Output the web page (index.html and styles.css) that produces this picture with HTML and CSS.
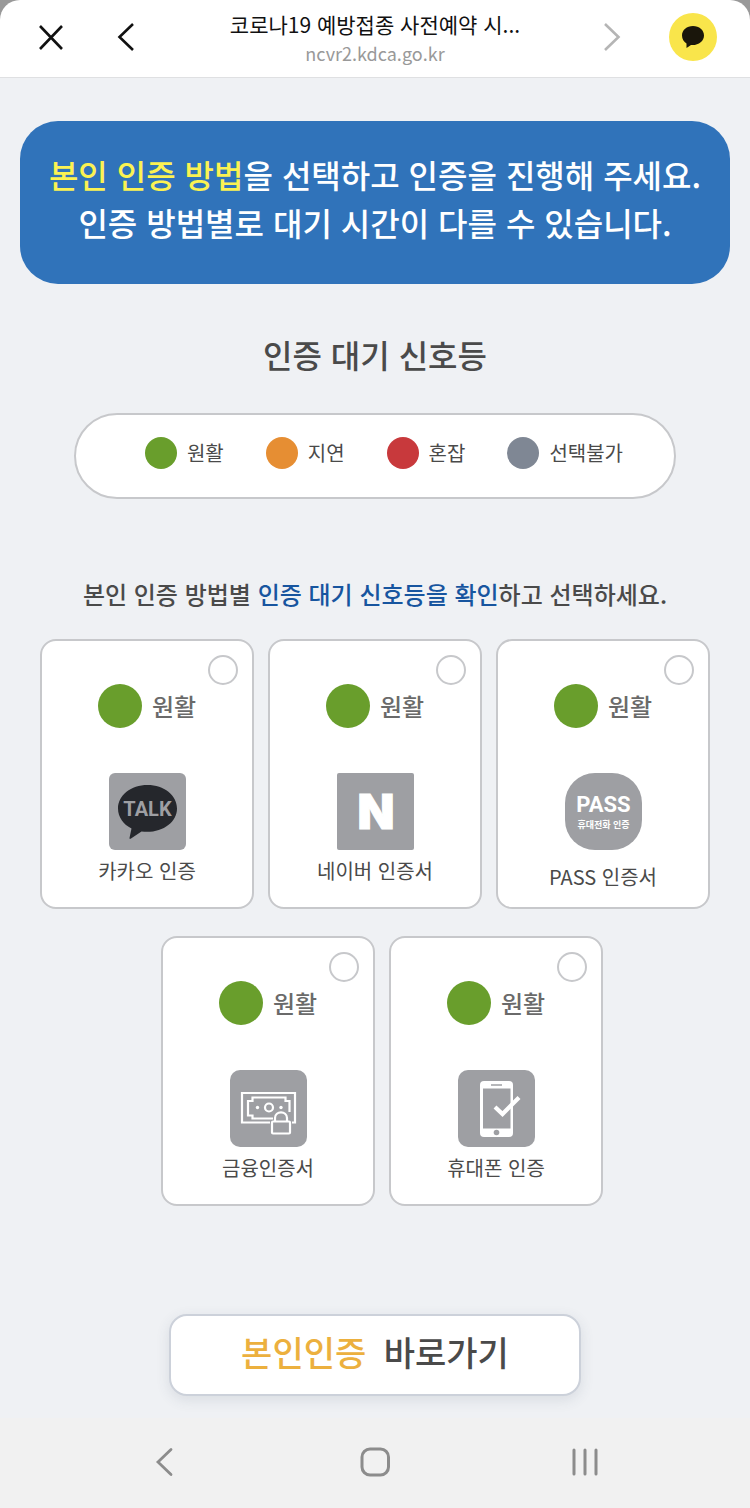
FILE: index.html
```html
<!DOCTYPE html>
<html lang="ko">
<head>
  <meta charset="UTF-8" />
  <meta name="viewport" content="width=device-width, initial-scale=1.0"/>
  <title>코로나19 예방접종 사전예약 시스템</title>
  <link rel="stylesheet" href="styles.css">
</head>
<body>
  <header class="browser-bar">
    <div class="bar-left">
      <button type="button" class="bar-button" aria-label="닫기">
        <svg width="28" height="28" viewBox="0 0 28 28"><path d="M3 3L25 26M25 3L3 26" fill="none" stroke="#111" stroke-width="2.6"/></svg>
      </button>
      <button type="button" class="bar-button" aria-label="뒤로">
        <svg width="28" height="28" viewBox="0 0 28 28"><path d="M21 1L7.500 14L21 27" fill="none" stroke="#111" stroke-width="2.6"/></svg>
      </button>
    </div>
    <div class="bar-title">
      <span class="page-name">코로나19 예방접종 사전예약 시...</span>
      <span class="page-url">ncvr2.kdca.go.kr</span>
    </div>
    <div class="bar-right">
      <button type="button" class="bar-button" aria-label="앞으로">
        <svg width="28" height="28" viewBox="0 0 28 28"><path d="M7 1L20.500 14L7 27" fill="none" stroke="#b5b5b5" stroke-width="2.6"/></svg>
      </button>
      <button type="button" class="bar-button talk-button" aria-label="카카오톡">
        <svg width="48" height="48" viewBox="0 0 48 48">
          <path d="M24 13C17.800 13 13 17 13 22.500C13 26 14.900 29 17.500 30.500L17.500 35L22 32C29 32.700 35 28.500 35 22.500C35 17 30.200 13 24 13Z" fill="#1a160b"/>
        </svg>
      </button>
    </div>
  </header>

  <main class="content">
    <p class="banner"><em>본인 인증 방법</em>을 선택하고 인증을 진행해 주세요.<br>인증 방법별로 대기 시간이 다를 수 있습니다.</p>

    <h1 class="heading">인증 대기 신호등</h1>
    <ul class="legend">
      <li><span class="dot green"></span>원활</li>
      <li><span class="dot orange"></span>지연</li>
      <li><span class="dot red"></span>혼잡</li>
      <li><span class="dot gray"></span>선택불가</li>
    </ul>

    <form class="auth-form">
      <p class="guide">본인 인증 방법별 <em>인증 대기 신호등을 확인</em>하고 선택하세요.</p>
      <div class="cards">
        <label class="card">
          <input type="radio" name="auth" value="kakao">
          <span class="status"><span class="dot big green"></span>원활</span>
          <svg class="logo" viewBox="0 0 77 77" aria-hidden="true">
            <rect width="77" height="77" rx="6" fill="#9e9fa3"/>
            <path d="M38.500 12C22 12 9 22.300 9 35.500C9 44 14.500 51.500 22.500 55.500L20.500 65Q20.500 66.500 22 65.500L32.500 58.500C52 61 68 50 68 35.500C68 22.300 55 12 38.500 12Z" fill="#25272c"/>
            <text x="38.500" y="43" class="logo-talk">TALK</text>
          </svg>
          <span class="name">카카오 인증</span>
        </label>
        <label class="card">
          <input type="radio" name="auth" value="naver">
          <span class="status"><span class="dot big green"></span>원활</span>
          <svg class="logo" viewBox="0 0 77 77" aria-hidden="true">
            <rect width="77" height="77" rx="2" fill="#9e9fa3"/>
            <text x="39" y="56" class="logo-n">N</text>
          </svg>
          <span class="name">네이버 인증서</span>
        </label>
        <label class="card">
          <input type="radio" name="auth" value="pass">
          <span class="status"><span class="dot big green"></span>원활</span>
          <svg class="logo logo-round" viewBox="0 0 77 77" aria-hidden="true">
            <rect width="77" height="77" rx="30" fill="#9e9fa3"/>
            <text x="38.500" y="39" class="logo-pass">PASS</text>
            <text x="38.500" y="55" class="logo-phone">휴대전화 인증</text>
          </svg>
          <span class="name">PASS 인증서</span>
        </label>
        <label class="card card-shift">
          <input type="radio" name="auth" value="finance">
          <span class="status"><span class="dot big green"></span>원활</span>
          <svg class="logo" viewBox="0 0 77 77" aria-hidden="true">
            <rect width="77" height="77" rx="10" fill="#9e9fa3"/>
            <g fill="none" stroke="#fff" stroke-width="2.2">
              <path d="M40 52.500H12V23H65V52.500H62"/>
              <path d="M43 48.500H22.500V45.500H18V31H22.500V27.500H55.500V31H59.500V42"/>
              <circle cx="39" cy="37.500" r="4"/>
              <path d="M45 51V48C45 40.500 57 40.500 57 48V51"/>
              <rect x="42" y="51.500" width="18" height="12" rx="1"/>
            </g>
            <circle cx="27.500" cy="37.500" r="1.700" fill="#fff"/>
            <circle cx="51" cy="37.500" r="1.700" fill="#fff"/>
          </svg>
          <span class="name">금융인증서</span>
        </label>
        <label class="card">
          <input type="radio" name="auth" value="phone">
          <span class="status"><span class="dot big green"></span>원활</span>
          <svg class="logo" viewBox="0 0 77 77" aria-hidden="true">
            <rect width="77" height="77" rx="10" fill="#9e9fa3"/>
            <rect x="22" y="11" width="33" height="56" rx="4" fill="#fff"/>
            <rect x="25" y="18.500" width="27.500" height="40" fill="#9e9fa3"/>
            <path d="M33 15H44" stroke="#9e9fa3" stroke-width="1.500"/>
            <circle cx="38.500" cy="62.500" r="2.800" fill="#9e9fa3"/>
            <path d="M37 37L44.500 44L61 27.500" fill="none" stroke="#fff" stroke-width="4.200"/>
          </svg>
          <span class="name">휴대폰 인증</span>
        </label>
      </div>
      <button type="submit" class="go-button"><em>본인인증</em> 바로가기</button>
    </form>
  </main>

  <nav class="system-nav">
    <button type="button" aria-label="이전">
      <svg width="32" height="32" viewBox="0 0 32 32"><path d="M22 3.500L9 16L22 28.500" fill="none" stroke="#8c8c8c" stroke-width="2.800" stroke-linecap="round"/></svg>
    </button>
    <button type="button" aria-label="홈">
      <svg width="32" height="32" viewBox="0 0 32 32"><rect x="3" y="3" width="26.500" height="26" rx="8" fill="none" stroke="#8c8c8c" stroke-width="3"/></svg>
    </button>
    <button type="button" aria-label="최근 앱">
      <svg width="32" height="32" viewBox="0 0 32 32"><path d="M5 4V28M16 4V28M27 4V28" stroke="#8c8c8c" stroke-width="3" stroke-linecap="round"/></svg>
    </button>
  </nav>
</body>
</html>
```
FILE: styles.css
```css
* {
  box-sizing: border-box;
}
body {
  margin: 0;
  min-height: 100vh;
  display: flex;
  flex-direction: column;
  font-family: "Noto Sans CJK KR", sans-serif;
  background-color: #eff1f4;
  color: #4a4a4a;
}
button {
  padding: 0;
  border: none;
  background: none;
  font-family: inherit;
  color: inherit;
  cursor: pointer;
}
svg {
  display: block;
}
em {
  font-style: normal;
}

/* top bar */
.browser-bar {
  display: grid;
  grid-template-columns: 1fr auto 1fr;
  height: 78px;
  background: linear-gradient(#999, #999) top / 100% 20px no-repeat;
  position: relative;
}
.browser-bar::before {
  content: "";
  position: absolute;
  inset: 0;
  background: #fff;
  border-bottom: 1px solid #dfe0e2;
  border-radius: 20px 20px 0 0;
}
.bar-left,
.bar-right,
.bar-title {
  position: relative;
  display: flex;
}
.bar-left,
.bar-right {
  align-items: center;
  padding-bottom: 4px;
}
.bar-left {
  gap: 27px;
  padding-left: 27px;
}
.bar-right {
  gap: 33px;
  justify-content: flex-end;
  padding-right: 33px;
}
.bar-button {
  width: 48px;
  height: 48px;
  display: flex;
  align-items: center;
  justify-content: center;
}
.talk-button {
  border-radius: 50%;
  background-color: #f9e54b;
}
.bar-title {
  flex-direction: column;
  align-items: center;
  padding-top: 9px;
}
.page-name {
  font-size: 21px;
  line-height: 30px;
  color: #111;
}
.page-url {
  font-size: 18px;
  line-height: 28px;
  color: #999;
}

/* page */
.content {
  flex: 1;
  padding: 43px 20px 22px;
}
.banner {
  margin: 0;
  padding: 29px 20px 38px;
  border-radius: 38px;
  background-color: #3073ba;
  color: #fff;
  font-size: 32px;
  font-weight: 500;
  line-height: 48px;
  text-align: center;
}
.banner em {
  color: #fbf252;
}
.heading {
  margin: 46px 0 35px;
  font-size: 32px;
  font-weight: 500;
  line-height: 48px;
  text-align: center;
}
.legend {
  display: flex;
  justify-content: center;
  gap: 42px;
  max-width: 602px;
  margin: 0 auto;
  padding: 22px 0 28px 18px;
  list-style: none;
  border: 2px solid #c7c8cb;
  border-radius: 43px;
  background-color: #fff;
  font-size: 20px;
  line-height: 32px;
}
.legend li {
  display: flex;
  align-items: center;
  gap: 10px;
}
.dot {
  width: 32px;
  height: 32px;
  border-radius: 50%;
}
.dot.big {
  width: 44px;
  height: 44px;
}
.green {
  background-color: #699e2c;
}
.orange {
  background-color: #e68e33;
}
.red {
  background-color: #c8393c;
}
.gray {
  background-color: #7f8794;
}

.guide {
  margin: 77px 0 27px;
  font-size: 24px;
  font-weight: 500;
  line-height: 36px;
  text-align: center;
}
.guide em {
  color: #17559f;
}
.cards {
  display: flex;
  flex-wrap: wrap;
  justify-content: center;
  gap: 27px 14px;
}
.card {
  position: relative;
  display: flex;
  flex-direction: column;
  align-items: center;
  width: 214px;
  height: 270px;
  padding-top: 43px;
  border: 2px solid #c7c8cb;
  border-radius: 16px;
  background-color: #fff;
  cursor: pointer;
}
/* second row starts one gap further in */
.card-shift {
  margin-left: 14px;
}
.card input {
  position: absolute;
  top: 14px;
  right: 14px;
  width: 30px;
  height: 30px;
  margin: 0;
  appearance: none;
  border: 2px solid #c7c8cb;
  border-radius: 50%;
  background-color: #fff;
  cursor: pointer;
}
.card input:checked {
  border: 9px solid #3073ba;
}
.status {
  display: flex;
  align-items: center;
  gap: 10px;
  margin-bottom: 45px;
  font-size: 24px;
  font-weight: 500;
  line-height: 44px;
  color: #6a6a6a;
}
.logo {
  width: 77px;
  height: 77px;
  margin-bottom: 6px;
}
.logo-round {
  margin-bottom: 12px;
}
.logo text {
  text-anchor: middle;
  fill: #fff;
}
.logo .logo-talk {
  font: 700 20px Roboto, sans-serif;
  fill: #9e9fa3;
}
.logo .logo-n {
  font: 900 48px Inter, sans-serif;
  stroke: #fff;
  stroke-width: 1px;
}
.logo .logo-pass {
  font: 700 22px Roboto, sans-serif;
}
.logo .logo-phone {
  font: 700 9px "Noto Sans CJK KR", sans-serif;
}
.name {
  font-size: 20px;
  line-height: 30px;
}
.go-button {
  display: block;
  width: 100%;
  max-width: 412px;
  margin: 108px auto 0;
  padding: 11px 0 17px;
  border: 2px solid #ccd1da;
  border-radius: 18px;
  background-color: #fff;
  box-shadow: 0 4px 14px rgba(60, 70, 100, 0.12);
  font-size: 34px;
  font-weight: 500;
  line-height: 50px;
}
.go-button em {
  margin-right: 8px;
  color: #ecb03e;
}

/* phone navigation */
.system-nav {
  display: flex;
  justify-content: center;
  gap: 178px;
  padding: 28px 0 30px;
  background-color: #f1f1f1;
}
```
